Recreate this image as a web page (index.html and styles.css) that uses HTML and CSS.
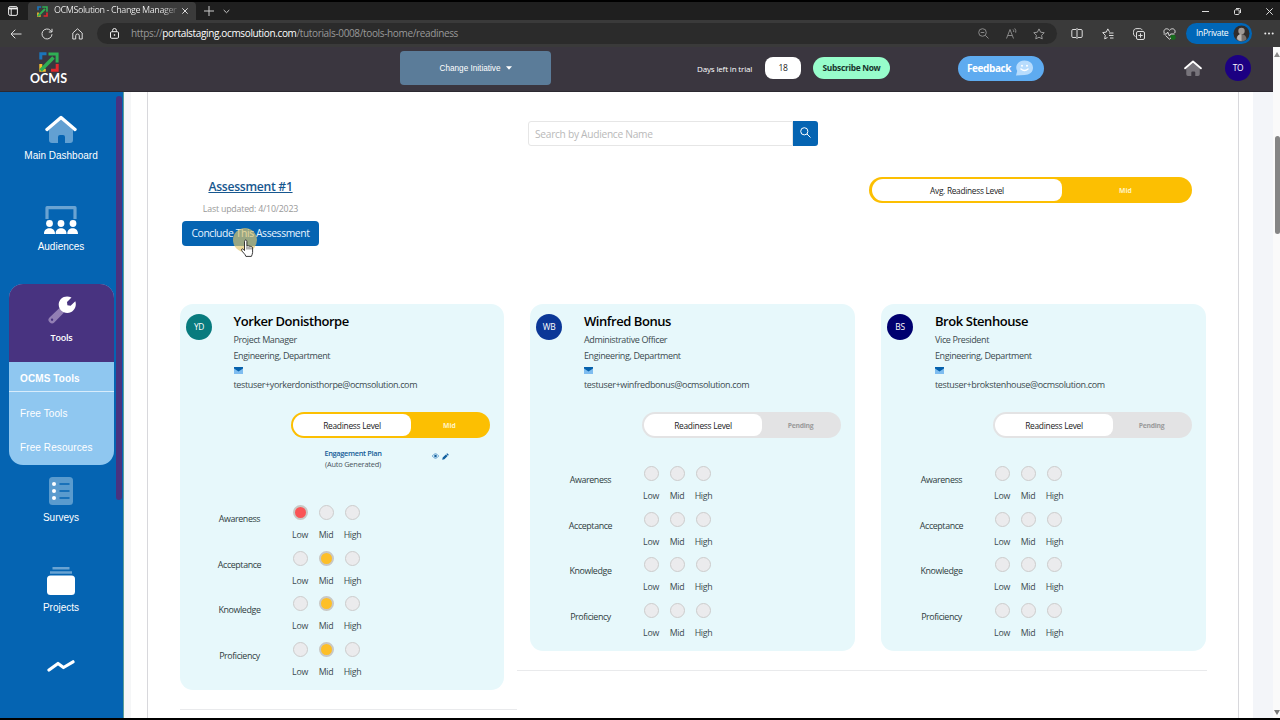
FILE: index.html
```html
<!DOCTYPE html>
<html lang="en">
<head>
<meta charset="utf-8">
<title>OCMSolution - Change Management</title>
<link rel="stylesheet" href="styles.css">
</head>
<body>
<svg class="defs" width="0" height="0" aria-hidden="true">
  <symbol id="logo" viewBox="0 0 20 20">
    <path d="M1.8 7.5V1.8h5.7" fill="none" stroke="#1b75bb" stroke-width="3"/>
    <path d="M1.8 12v6.2h5" fill="none" stroke="#f5c02c" stroke-width="3"/>
    <path d="M18.2 12v6.2H12" fill="none" stroke="#e0282e" stroke-width="3"/>
    <path d="M1.6 18.4 14.5 5.5" stroke="#2fae54" stroke-width="3.6"/>
    <path d="M9.5.4H19.6V10.6H16.6V3.4H9.5z" fill="#2fae54"/>
  </symbol>
  <symbol id="mail" viewBox="0 0 9 7">
    <path d="M0 0h9v7H0z" fill="#7fbdf0"/><path d="M0 0h9v1.6L4.5 4.6 0 1.6z" fill="#0561ac"/>
  </symbol>
  <symbol id="house" viewBox="0 0 32 28">
    <path d="M4 15 16 4.500l12 10.500v10a3 3 0 0 1-3 3h-5v-6a2 2 0 0 0-2-2h-3a2 2 0 0 0-2 2v6H7a3 3 0 0 1-3-3z" fill="currentColor"/>
    <path d="M2 14.500 16 2.500l14 12" fill="none" stroke="#fff" stroke-width="3.400" stroke-linecap="round" stroke-linejoin="round"/>
  </symbol>
</svg>

<div class="tabbar">
  <div class="workspace"><svg width="10" height="10" viewBox="0 0 10 10" fill="none" stroke="#eee"><rect x=".6" y=".6" width="8.800" height="8.800" rx="1.500"/><path d="M.6 2.500h8.800" stroke-width="1.800"/><path d="M3.200 3v6"/></svg></div>
  <div class="tab">
    <svg width="11" height="11"><use href="#logo"/></svg>
    <span class="tab-title">OCMSolution - Change Manager</span>
    <svg width="6" height="6" viewBox="0 0 6 6" stroke="#ddd"><path d="M.3.3l5.400 5.400M5.700.3.3 5.700"/></svg>
  </div>
  <svg class="tab-add" width="10" height="10" viewBox="0 0 10 10" stroke="#ccc"><path d="M5 0v10M0 5h10"/></svg>
  <svg class="tab-more" width="7" height="5" viewBox="0 0 7 5" fill="none" stroke="#ccc"><path d="M.7 1 3.500 3.700 6.300 1"/></svg>
  <div class="window-buttons">
    <svg width="7" height="7" viewBox="0 0 7 7" stroke="#ddd"><path d="M0 3.500h7"/></svg>
    <svg width="7" height="7" viewBox="0 0 7 7" fill="none" stroke="#ddd"><rect x=".5" y="1.800" width="4.700" height="4.700" rx="1"/><path d="M2 .5h3.500q1 0 1 1V5"/></svg>
    <svg width="7" height="7" viewBox="0 0 7 7" stroke="#ddd"><path d="M.3.3l6.400 6.400M6.700.3.3 6.700"/></svg>
  </div>
</div>

<div class="toolbar">
  <span class="tool"><svg width="12" height="10" viewBox="0 0 12 10" fill="none" stroke="#ddd"><path d="M11.500 5H1M5.300.7 1 5l4.300 4.300"/></svg></span>
  <span class="tool"><svg width="12" height="12" viewBox="0 0 12 12" fill="none" stroke="#ddd"><path d="M11 6.200A5 5 0 1 1 9.600 2.500L11 4M11 .8V4H7.800"/></svg></span>
  <span class="tool"><svg width="11" height="12" viewBox="0 0 11 12" fill="none" stroke="#ddd"><path d="M.8 5 5.500.8 10.200 5v6H7.300V7.800a1.800 1.800 0 0 0-3.600 0V11H.8z" stroke-linejoin="round"/></svg></span>
  <div class="address">
    <svg width="9" height="11" viewBox="0 0 9 11" fill="none" stroke="#eee"><rect x=".5" y="3.700" width="8" height="6.600" rx="1.200"/><path d="M2.600 3.700V2.400a1.900 1.900 0 0 1 3.800 0v1.300"/><circle cx="4.500" cy="7" r=".5"/></svg>
    <span class="url">https://<b>portalstaging.ocmsolution.com</b>/tutorials-0008/tools-home/readiness</span>
    <span class="address-tool"><svg width="11" height="11" viewBox="0 0 11 11" fill="none" stroke="#888"><circle cx="4.500" cy="4.500" r="3.800"/><path d="m7.300 7.300 3.200 3.200M2.700 4.500h3.600"/></svg></span>
    <span class="address-tool"><svg width="11" height="11" viewBox="0 0 11 11" fill="none" stroke="#888"><path d="M.5 10.500 4 1.500l3.500 9M1.700 7.500h4.600M7 1.500q1 1 .7 2.500M8.700.4q1.700 2 1 4.300"/></svg></span>
    <span class="address-tool"><svg width="12" height="12" viewBox="0 0 12 12" fill="none" stroke="#999"><path d="m6 .9 1.600 3.300 3.600.5-2.600 2.600.6 3.600L6 9.200l-3.200 1.700.6-3.600L.8 4.700l3.600-.5z" stroke-linejoin="round"/></svg></span>
  </div>
  <span class="tool"><svg width="12" height="11" viewBox="0 0 12 11" fill="none" stroke="#ddd"><path d="M5 1.500H2a1.200 1.200 0 0 0-1.200 1.200v5.600A1.200 1.200 0 0 0 2 9.500h3M7 1.500h3a1.200 1.200 0 0 1 1.200 1.200v5.600A1.200 1.200 0 0 1 10 9.500H7M6 0v11"/></svg></span>
  <span class="tool"><svg width="12" height="12" viewBox="0 0 12 12" fill="none" stroke="#ddd"><path d="M7.500 3.800 5.800.9 4.300 4.100l-3.600.5 2.600 2.700-.6 3.600L5.500 9.500M7 5h4.500M7 7.500h4.500M8 10h3.500" stroke-linejoin="round"/></svg></span>
  <span class="tool"><svg width="12" height="12" viewBox="0 0 12 12" fill="none" stroke="#ddd"><rect x="3.500" y="3.500" width="8" height="8" rx="1.500"/><path d="M7.500 5.300v4.400M5.300 7.500h4.400M2.500 8.500C0 7.500.3 5 .6 3.200.8 1.200 2 .6 4 .6h2.800c1.400 0 2 .6 2.200 1.600"/></svg></span>
  <span class="tool"><svg width="13" height="12" viewBox="0 0 13 12" fill="none" stroke="#ddd"><circle cx="10" cy="9.300" r="2.700" fill="#176b1c" stroke="none"/><path d="M1.200 5C-.2 1.200 4-.8 6.500 2.300 9-.8 13.200 1.200 11.800 5M.5 6h3l1.200-2 1.700 4 1.200-2h4M2.500 7.500l4 3.700 1.500-1.400"/></svg></span>
  <div class="inprivate">InPrivate
    <svg width="17" height="17" viewBox="0 0 17 17"><circle cx="8.500" cy="8.500" r="8" fill="#302d2c"/><circle cx="8.500" cy="6" r="3.200" fill="#a09a96"/><path d="M3.500 14.500c0-7 10-7 10 0a8 8 0 0 1-10 0z" fill="#77716e"/><path d="M4 13.500c0-3 2-4.500 4.500-4.500v7q-3 0-4.500-2.500" fill="#b9b5b1"/></svg>
  </div>
  <svg class="menu-dots" width="10" height="3" viewBox="0 0 10 3" fill="#eee"><circle cx="1.300" cy="1.500" r="1"/><circle cx="5" cy="1.500" r="1"/><circle cx="8.700" cy="1.500" r="1"/></svg>
</div>

<div class="viewport">
  <div class="app">
    <header class="header">
      <div class="brand"><svg width="20" height="20"><use href="#logo"/></svg><span>OCMS</span></div>
      <div class="initiative">Change Initiative <svg width="6" height="4" viewBox="0 0 6 4"><path d="M0 .3h6L3 3.800z" fill="#fff"/></svg></div>
      <span class="days">Days left in trial</span>
      <span class="count">18</span>
      <span class="subscribe">Subscribe Now</span>
      <span class="feedback">Feedback <svg width="19" height="16" viewBox="0 0 19 16"><path d="M1 15.500 2.200 11A7 7 0 0 1 2 4.500C3.500 1.700 6 .5 9.500.5c5 0 8.500 3 8.500 7.300 0 4.200-3.500 7.200-8.500 7.200z" fill="#b7dcfd"/><circle cx="7" cy="5.800" r="1" fill="#fff"/><circle cx="12" cy="5.800" r="1" fill="#fff"/><path d="M6 9q3.500 3 7 0" fill="none" stroke="#fff" stroke-width="1.500" stroke-linecap="round"/></svg></span>
      <svg class="home" width="18" height="16"><use href="#house"/></svg>
      <span class="user">TO</span>
    </header>

    <div class="body">
      <nav class="sidebar">
        <div class="nav-list">
          <a class="nav-item first"><svg width="32" height="28"><use href="#house"/></svg>Main Dashboard</a>
          <a class="nav-item second"><svg width="34" height="28" viewBox="0 0 34 28"><path d="M3 13V1.700h28V13" fill="none" stroke="#6aa3d2" stroke-width="3.200" stroke-linejoin="round"/><g fill="#fff"><circle cx="5.500" cy="17.500" r="3.400"/><circle cx="17" cy="17.500" r="3.400"/><circle cx="29" cy="17.500" r="3.400"/><path d="M0 27.500c0-7 11-7 11 0q0 .5-.5.500H.5q-.5 0-.5-.5zM11.600 27.500c0-7 10.900-7 10.900 0q0 .5-.5.500h-9.900q-.5 0-.5-.5zM23.300 27.500c0-7 10.700-7 10.700 0q0 .5-.5.500h-9.700q-.5 0-.5-.5z"/></g></svg>Audiences</a>
          <div class="nav-tools">
            <a class="tools-head"><svg width="28" height="28" viewBox="0 0 28 28"><path d="m11.500 12 4.500 4.500L6.500 26.200a3.400 3.400 0 0 1-5-4.800zM4 22.600a1.200 1.200 0 1 0 .1 2.400 1.200 1.200 0 0 0-.1-2.400z" fill="#927fb4" fill-rule="evenodd"/><path d="M23.500 1.600 19 6l.4 3.200 3.200.6 4.700-4.600c2 6-2 11.800-8 11.800-5 0-8.600-3.600-8.600-8.400 0-6 6.500-10.200 12.800-7z" fill="#fff"/></svg>Tools</a>
            <a class="sub active">OCMS Tools</a>
            <a class="sub">Free Tools</a>
            <a class="sub">Free Resources</a>
          </div>
          <a class="nav-item surveys"><svg width="24" height="28" viewBox="0 0 24 28"><rect width="24" height="28" rx="3.500" fill="#5a9bce"/><g fill="#fff"><circle cx="5" cy="7" r="2"/><circle cx="5" cy="14" r="2"/><circle cx="5" cy="21" r="2"/></g><path d="M10.500 7h10M10.500 14h10M10.500 21h10" stroke="#0564b2" stroke-width="1.500"/></svg>Surveys</a>
          <a class="nav-item projects"><svg width="28" height="28" viewBox="0 0 28 28"><path d="M5.500 1.300h17M3 5.500h22" stroke="#6aa3d2" stroke-width="2.400"/><rect y="8.500" width="28" height="19.500" rx="3.500" fill="#fff"/></svg>Projects</a>
          <a class="nav-item trend"><svg width="28" height="12" viewBox="0 0 28 12"><path d="m2 10 9-6.500 5.500 4L26 1.800" fill="none" stroke="#fff" stroke-width="3.200" stroke-linecap="round" stroke-linejoin="round"/></svg></a>
        </div>
        <div class="nav-scroll"></div>
      </nav>

      <main class="panel">
        <div class="search"><span class="search-input">Search by Audience Name</span><span class="search-button"><svg width="11" height="11" viewBox="0 0 11 11" fill="none" stroke="#fff"><circle cx="4.300" cy="4.300" r="3.600"/><path d="m7 7 3.500 3.500"/></svg></span></div>

        <div class="summary">
          <div class="assessment">
            <a class="assessment-link">Assessment #1</a>
            <span class="updated">Last updated: 4/10/2023</span>
            <span class="conclude">Conclude This Assessment
              <svg class="pointer" width="26" height="32" viewBox="0 0 26 32"><circle cx="12" cy="13" r="12" fill="#e0c56c" fill-opacity=".68"/><path d="M11.500 14.500c0-2 2.400-2 2.400 0v4.600c.6-.8 1.900-.7 2.100.3.700-.6 1.700-.4 1.900.5.700-.5 1.700-.1 1.700.9v4.700c0 1.700-.9 2.600-1.200 3.900h-5.500c-.8-2.600-3.300-4-4.200-6-.7-1.400.7-2 1.600-1.100l1.200 1.300z" fill="#fff" stroke="#222" stroke-width=".9"/><path d="M14 19.500v3M16 20v2.500M18 20.500v2" stroke="#222" stroke-width=".7"/></svg>
            </span>
          </div>
          <div class="level mid average"><span class="level-name">Avg. Readiness Level</span><span class="level-value">Mid</span></div>
        </div>

        <div class="people">
          <section class="person">
            <article class="card tall">
              <div class="identity"><span class="avatar teal">YD</span>
                <div class="details"><h2>Yorker Donisthorpe</h2><p>Project Manager</p><p>Engineering, Department</p><svg class="mail" width="9" height="7"><use href="#mail"/></svg><p class="email">testuser+yorkerdonisthorpe@ocmsolution.com</p></div></div>
              <div class="level mid"><span class="level-name">Readiness Level</span><span class="level-value">Mid</span></div>
              <div class="plan"><div class="plan-name"><a>Engagement Plan</a><span>(Auto Generated)</span></div>
                <svg width="7" height="6" viewBox="0 0 7 6" fill="none"><path d="M.3 3Q3.500-1.500 6.700 3 3.500 7.500.3 3z" stroke="#4d91c8" stroke-width=".8"/><circle cx="3.500" cy="3" r="1.300" fill="#12609f"/></svg>
                <svg width="7" height="7" viewBox="0 0 7 7"><path d="M5.200.2 6.800 1.800 6 2.700 4.300 1zM3.900 1.400l1.700 1.700-3.200 3.100L.2 6.800.7 4.600z" fill="#12609f"/></svg></div>
              <div class="ratings">
                <div class="rating"><span class="trait">Awareness</span><span class="option"><i class="dot low"></i>Low</span><span class="option"><i class="dot"></i>Mid</span><span class="option high"><i class="dot"></i>High</span></div>
                <div class="rating"><span class="trait">Acceptance</span><span class="option"><i class="dot"></i>Low</span><span class="option"><i class="dot medium"></i>Mid</span><span class="option high"><i class="dot"></i>High</span></div>
                <div class="rating"><span class="trait">Knowledge</span><span class="option"><i class="dot"></i>Low</span><span class="option"><i class="dot medium"></i>Mid</span><span class="option high"><i class="dot"></i>High</span></div>
                <div class="rating"><span class="trait">Proficiency</span><span class="option"><i class="dot"></i>Low</span><span class="option"><i class="dot medium"></i>Mid</span><span class="option high"><i class="dot"></i>High</span></div>
              </div>
            </article>
          </section>

          <section class="person">
            <article class="card">
              <div class="identity"><span class="avatar blue">WB</span>
                <div class="details"><h2>Winfred Bonus</h2><p>Administrative Officer</p><p>Engineering, Department</p><svg class="mail" width="9" height="7"><use href="#mail"/></svg><p class="email">testuser+winfredbonus@ocmsolution.com</p></div></div>
              <div class="level"><span class="level-name">Readiness Level</span><span class="level-value">Pending</span></div>
              <div class="ratings">
                <div class="rating"><span class="trait">Awareness</span><span class="option"><i class="dot"></i>Low</span><span class="option"><i class="dot"></i>Mid</span><span class="option high"><i class="dot"></i>High</span></div>
                <div class="rating"><span class="trait">Acceptance</span><span class="option"><i class="dot"></i>Low</span><span class="option"><i class="dot"></i>Mid</span><span class="option high"><i class="dot"></i>High</span></div>
                <div class="rating"><span class="trait">Knowledge</span><span class="option"><i class="dot"></i>Low</span><span class="option"><i class="dot"></i>Mid</span><span class="option high"><i class="dot"></i>High</span></div>
                <div class="rating"><span class="trait">Proficiency</span><span class="option"><i class="dot"></i>Low</span><span class="option"><i class="dot"></i>Mid</span><span class="option high"><i class="dot"></i>High</span></div>
              </div>
            </article>
          </section>

          <section class="person">
            <article class="card">
              <div class="identity"><span class="avatar navy">BS</span>
                <div class="details"><h2>Brok Stenhouse</h2><p>Vice President</p><p>Engineering, Department</p><svg class="mail" width="9" height="7"><use href="#mail"/></svg><p class="email">testuser+brokstenhouse@ocmsolution.com</p></div></div>
              <div class="level"><span class="level-name">Readiness Level</span><span class="level-value">Pending</span></div>
              <div class="ratings">
                <div class="rating"><span class="trait">Awareness</span><span class="option"><i class="dot"></i>Low</span><span class="option"><i class="dot"></i>Mid</span><span class="option high"><i class="dot"></i>High</span></div>
                <div class="rating"><span class="trait">Acceptance</span><span class="option"><i class="dot"></i>Low</span><span class="option"><i class="dot"></i>Mid</span><span class="option high"><i class="dot"></i>High</span></div>
                <div class="rating"><span class="trait">Knowledge</span><span class="option"><i class="dot"></i>Low</span><span class="option"><i class="dot"></i>Mid</span><span class="option high"><i class="dot"></i>High</span></div>
                <div class="rating"><span class="trait">Proficiency</span><span class="option"><i class="dot"></i>Low</span><span class="option"><i class="dot"></i>Mid</span><span class="option high"><i class="dot"></i>High</span></div>
              </div>
            </article>
          </section>
        </div>
      </main>
      <div class="gutter"></div>
    </div>
  </div>
  <div class="scrollbar">
    <svg width="6" height="5" viewBox="0 0 6 5"><path d="M3 0 6 5H0z" fill="#8b8b8b"/></svg>
    <div class="thumb"></div>
    <svg class="down" width="6" height="5" viewBox="0 0 6 5"><path d="M3 5 6 0H0z" fill="#777"/></svg>
  </div>
</div>
</body>
</html>
```
FILE: styles.css
```css
* { box-sizing: border-box; }
body {
  margin: 0; width: 1280px; height: 720px; overflow: hidden;
  display: flex; flex-direction: column;
  border-top: 2px solid #000; border-bottom: 2px solid #000;
  font: 9.33px/13px "Open Sans", "Noto Sans", sans-serif;
  letter-spacing: -0.3px; color: #3c4a4f; background: #fff;
}
svg { flex: none; display: block; }
.defs { position: absolute; }
h2, p { margin: 0; }
span, a, p, h2 { white-space: nowrap; }

/* Browser frame */
.tabbar { height: 18px; flex: none; display: flex; align-items: center; background: #1f1f1f; }
.workspace { width: 28px; height: 18px; padding-left: 8px; display: flex; align-items: center; border-radius: 0 0 4px 0; }
.tab { width: 168px; height: 18px; padding-left: 9px; display: flex; align-items: center; background: #3b3b3b; border-radius: 4px 4px 0 0; }
.tab-title {
  width: 123px; margin: 0 5px 0 6px; font-size: 9px; line-height: 14px; letter-spacing: -0.42px;
  padding-bottom: 2px;
  color: transparent; background: linear-gradient(90deg, #f0f0f0 88%, #777 98%); background-clip: text;
}
.tab-add { margin-left: 8px; }
.tab-more { margin-left: 9px; }
.window-buttons { margin-left: auto; padding-right: 7px; display: flex; gap: 25px; }
.toolbar { height: 27px; flex: none; display: flex; align-items: center; background: #3a3a3a; }
.tool { width: 31px; display: flex; justify-content: center; }
.address {
  width: 960px; height: 21px; margin: 0 4px; padding: 0 4px 0 13px; border-radius: 11px;
  display: flex; align-items: center; background: #2b2b2b; color: #999; font-size: 10px; letter-spacing: -0.35px;
}
.url { margin-left: 12px; margin-right: auto; }
.url b { font-weight: 400; color: #fff; }
.address-tool { width: 28px; display: flex; justify-content: center; }
.inprivate {
  width: 66px; height: 21px; margin-left: 1px; padding: 0 2px 0 10px; border-radius: 11px;
  display: flex; align-items: center; justify-content: space-between;
  background: #0067b8; color: #fff; font-size: 8.6px; letter-spacing: -0.35px;
}
.menu-dots { margin-left: 12px; }

/* Application shell */
.viewport { flex: 1; min-height: 0; display: flex; }
.app { width: 1273px; display: flex; flex-direction: column; }
.scrollbar { width: 7px; padding: 5px 0 3px; display: flex; flex-direction: column; align-items: flex-end; background: #fafafa; }
.thumb { width: 5px; height: 98px; margin-top: 79px; border-radius: 3px; background: #858585; }
.down { margin-top: auto; }

.header { height: 45px; flex: none; padding-bottom: 2px; display: flex; align-items: center; background: #3a363f; color: #fff; border-bottom: 1px solid #2c2931; }
.brand { width: 97px; padding-top: 1px; display: flex; flex-direction: column; align-items: center; font: 700 12.500px/14px Lato, sans-serif; letter-spacing: 0; }
.initiative {
  width: 151px; height: 34px; margin-left: 303px; border-radius: 4px; background: #5b7c99;
  display: flex; align-items: center; justify-content: center; gap: 5px; font: 8.200px "Liberation Sans", sans-serif; letter-spacing: 0;
}
.days { width: 55px; margin-left: 146px; font-size: 8px; font-weight: 500; line-height: 11px; letter-spacing: -0.15px; }
.count { width: 36px; height: 22px; margin-left: 13px; border-radius: 8px; background: #fff; color: #222; font-size: 8.500px; font-weight: 500; line-height: 21px; text-align: center; }
.subscribe { width: 77px; height: 22px; margin-left: 12px; border-radius: 11px; background: #97fdcb; color: #17352c; font-size: 8.400px; font-weight: 700; line-height: 22px; text-align: center; letter-spacing: -0.3px; }
.feedback { width: 86px; height: 25px; margin-left: 68px; padding: 0 10px 0 9px; border-radius: 13px; background: #5eabf0; display: flex; align-items: center; justify-content: space-between; font-size: 10px; font-weight: 700; letter-spacing: -0.4px; }
.home { margin-left: 140px; color: #77747b; }
.user { width: 26px; height: 26px; margin-left: 23px; border-radius: 50%; background: #1c0082; font-size: 8.400px; line-height: 26px; text-align: center; }

.body { flex: 1; min-height: 0; display: flex; background: linear-gradient(90deg, #f5f6f7 131px, #fff 131px); }

/* Sidebar */
.sidebar { width: 124px; flex: none; display: flex; background: #0564b2; border-right: 1px solid #5c9e96; }
.nav-list { width: 116px; padding-top: 23px; display: flex; flex-direction: column; color: #fff; font: 10px/14px "Liberation Sans", sans-serif; letter-spacing: 0; }
.nav-scroll { width: 6px; height: 404px; margin-top: 4px; border-radius: 3px; background: #483380; }
.nav-item { height: 91px; padding-left: 6px; display: flex; flex-direction: column; align-items: center; gap: 6px; color: #fff; }
.nav-item svg { color: #62a0d2; }
.second { height: 78px; }
.nav-tools { width: 105px; height: 181px; margin-left: 9px; border-radius: 14px; overflow: hidden; background: #8fc7f0; display: flex; flex-direction: column; }
.tools-head { height: 78px; padding-top: 12px; display: flex; flex-direction: column; align-items: center; gap: 7px; background: #483380; font: 600 9px/13px "Open Sans", sans-serif; letter-spacing: -0.2px; }
.sub { height: 34px; padding-left: 11px; line-height: 35px; letter-spacing: 0.1px; }
.active { height: 30px; margin-bottom: 4px; line-height: 33px; font-weight: 700; border-bottom: 1.500px solid #d8ecfb; }
.surveys { margin-top: 12px; height: 90px; }
.projects { height: 92.500px; }
.trend { height: 12px; }

/* Main panel */
.panel { width: 1092px; margin-left: 23px; padding: 29px 32px 0 32px; border: 1px solid #d8d8dc; border-width: 0 1px; flex: none; background: #fff; display: flex; flex-direction: column; }
.gutter { width: 20px; margin-left: auto; background: #f3f5f9; }
.search { width: 290px; height: 25px; margin-left: 348px; flex: none; display: flex; }
.search-input { width: 265px; padding-left: 6px; border: 1px solid #e6e6e6; border-radius: 3px 0 0 3px; color: #b9b9b9; font-size: 10.200px; line-height: 24px; letter-spacing: -0.28px; }
.search-button { width: 25px; padding-bottom: 2px; border-radius: 0 3px 3px 0; background: #0564b2; display: flex; align-items: center; justify-content: center; }
.summary { height: 158px; flex: none; padding-top: 31px; display: flex; justify-content: space-between; }
.assessment { width: 141px; display: flex; flex-direction: column; align-items: center; }
.assessment-link { margin-top: 1px; color: #17578f; font-size: 12.200px; font-weight: 600; line-height: 18px; text-decoration: underline; }
.updated { margin-top: 7px; color: #999; font-size: 8.800px; line-height: 13px; letter-spacing: -0.2px; }
.conclude { position: relative; width: 137px; height: 25px; margin-top: 5px; border-radius: 4px; background: #0564b2; color: #e8f3ff; font-size: 10.400px; line-height: 24px; text-align: center; letter-spacing: -0.42px; }
.pointer { position: absolute; left: 51px; top: 6px; }

.level { width: 199px; height: 26px; margin: 0 0 0 112px; padding: 2px; border-radius: 13px; background: #e3e3e4; display: flex; text-align: center; line-height: 23px; }
.level-name { width: 118px; border-radius: 11px 8px 8px 11px; background: #fff; color: #222; font-size: 8.400px; font-weight: 500; letter-spacing: -0.28px; }
.level-value { flex: 1; color: #9b9b9b; font-size: 6.800px; font-weight: 700; letter-spacing: -0.25px; }
.mid { background: #fcbf02; }
.mid .level-value { color: #fff3c4; letter-spacing: 0; }
.average { width: 323px; margin: 0 14px 0 0; padding: 2px 3px; }
.average .level-name { width: 190px; font-size: 8.300px; }

/* People cards */
.people { display: flex; align-items: flex-start; width: 1027px; flex: none; }
.person { width: 351px; padding: 0 0 19px 13px; border-bottom: 1px solid #e9eaec; }
.person:first-child { width: 337px; padding-left: 0; }
.person:last-child { width: 339px; }
.card { width: 325px; height: 347px; padding-top: 10px; border-radius: 13px; background: #e7f8fb; }
.card.tall { width: 324px; height: 386px; }
.identity { height: 98px; padding-left: 6px; display: flex; gap: 22px; }
.avatar { width: 26px; height: 26px; border-radius: 50%; color: #fff; font-size: 8.400px; line-height: 26px; text-align: center; }
.tall .identity { gap: 21.500px; }
.teal { background: #087b7e; }
.blue { background: #0b3797; }
.navy { background: #00006f; }
.details { display: flex; flex-direction: column; }
h2 { height: 18px; color: #000; font-size: 13px; font-weight: 600; line-height: 15px; letter-spacing: -0.45px; }
.details p { height: 15.500px; line-height: 16px; font-size: 9px; letter-spacing: -0.38px; }
.mail { margin: 4px 0 4px; }
.details .email { line-height: 14px; letter-spacing: -0.35px; }
.tall .level { margin-left: 111px; }
.plan { height: 28px; margin-top: 9px; padding-left: 145px; display: flex; color: #4b565b; font-size: 7.400px; line-height: 11px; letter-spacing: -0.2px; align-items: flex-start; }
.plan-name { width: 56px; padding-top: 1px; display: flex; flex-direction: column; align-items: center; }
.plan-name a { color: #155d98; font-weight: 600; letter-spacing: -0.32px; }
.plan svg { margin: 6px 3px 0 0; }
.plan .plan-name + svg { margin-left: 51px; }
.ratings { padding: 28px 0 0 13px; }
.tall .ratings { padding: 30px 0 0 12px; }
.rating { height: 45.500px; display: flex; }
.trait { width: 95px; text-align: center; line-height: 28px; font-size: 8.900px; letter-spacing: -0.4px; color: #2f3c40; }
.option { width: 26px; display: flex; flex-direction: column; align-items: center; font-size: 8.800px; line-height: 14px; }
.high { width: 27px; }
.dot { width: 15px; height: 15px; margin-bottom: 8px; border: 1px solid #ccc; border-radius: 50%; background: #ebebed; }
.low, .medium { border: 2px solid #c9c8c4; }
.low { background: #fa5456; }
.medium { background: #fdbf28; }
```
